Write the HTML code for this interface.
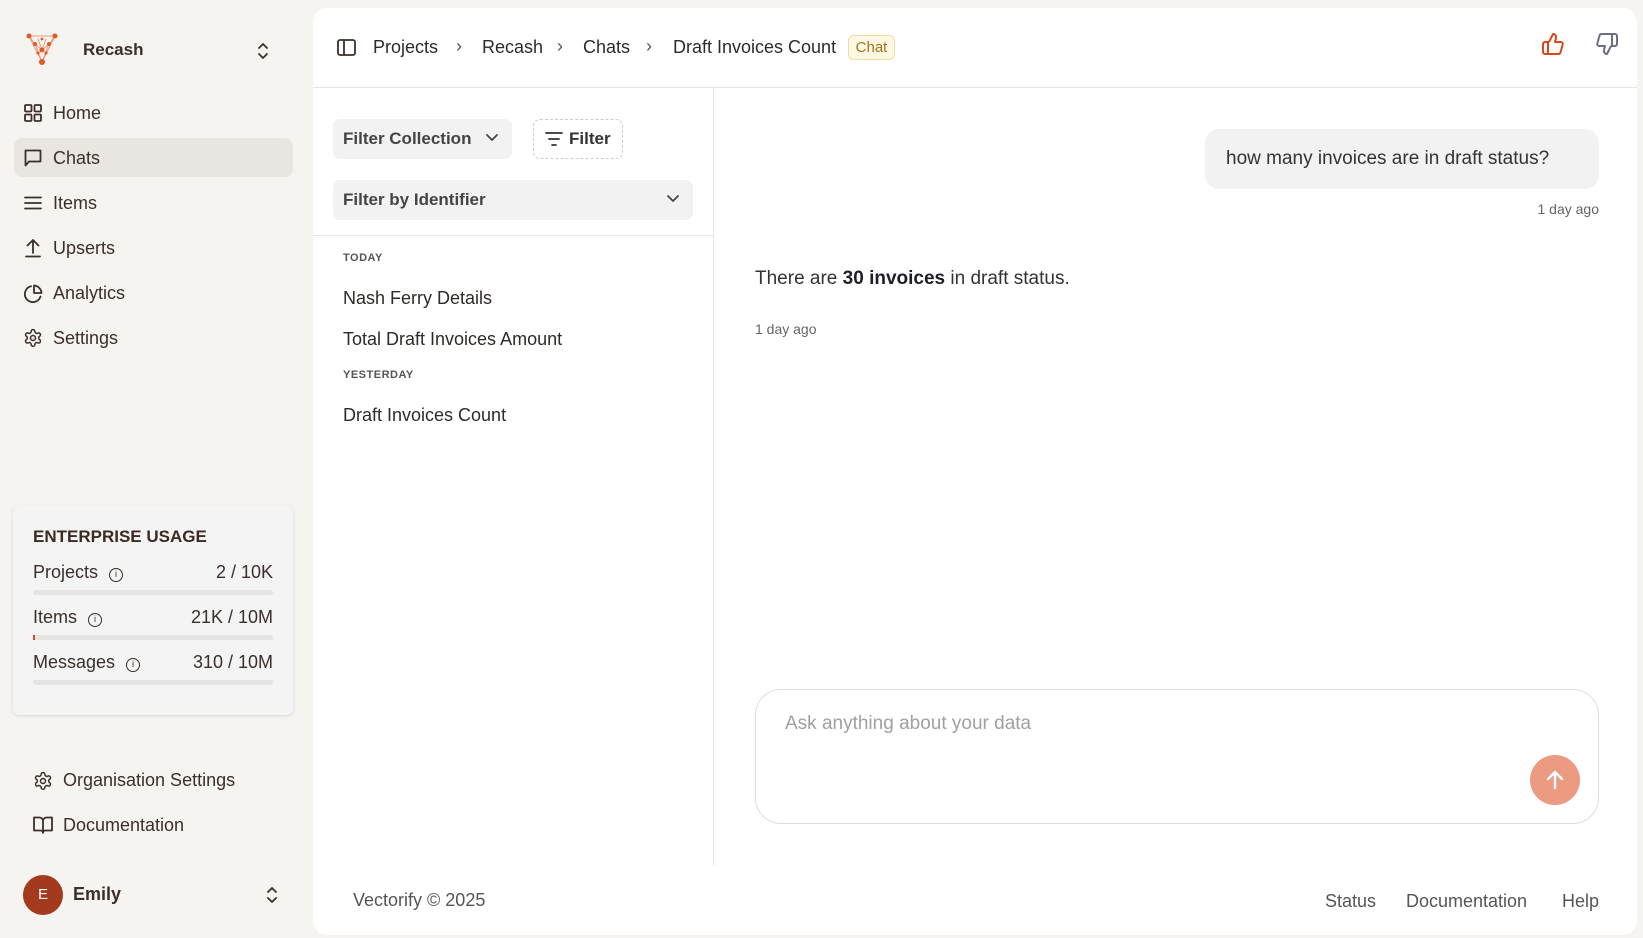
<!DOCTYPE html>
<html><head><meta charset="utf-8"><style>
*{box-sizing:border-box;margin:0;padding:0}
body{width:1643px;height:938px;background:#f5f4f1;font-family:"Liberation Sans",sans-serif;color:#3b2f2a;position:relative;overflow:hidden}
.a{position:absolute;white-space:nowrap}
.nav{font-size:18px;color:#3b2f2a}
svg{position:absolute;fill:none;stroke:#3b2f2a;stroke-width:1.8;stroke-linecap:round;stroke-linejoin:round}
.card{position:absolute;left:313px;top:8px;width:1324px;height:927px;background:#fff;border-radius:14px}
.t{font-size:18px;color:#2f2a28}
.bar{position:absolute;left:33px;width:240px;height:5px;border-radius:3px;background:#e4e3e1}
</style></head><body>
<!-- logo -->
<svg style="left:26px;top:32px;stroke:#e89a7a;stroke-width:1" width="32" height="36" viewBox="0 0 32 36"><path d="M3 4L29 4L16 30Z M3 4L9 12L16 18L23 12L29 4 M9 12L16 30 M23 12L16 30 M12 7L16 18L20 7"/><g fill="#e05a2a" stroke="none"><circle cx="3" cy="4" r="2.5"/><circle cx="29" cy="4" r="2.5"/><circle cx="16" cy="30" r="3"/><circle cx="16" cy="18" r="2.5"/><circle cx="9" cy="12" r="2"/><circle cx="23" cy="12" r="2"/><circle cx="12" cy="21" r="1.6"/><circle cx="20" cy="21" r="1.6"/><circle cx="16" cy="7" r="1.4"/></g></svg>
<div class="a" style="left:83px;top:40px;font-size:17px;font-weight:bold;color:#3b2f2a">Recash</div>
<svg style="left:256px;top:42px" width="14" height="18" viewBox="0 0 14 18"><path d="M3 6l4-4 4 4M3 12l4 4 4-4"/></svg>

<div class="a" style="left:14px;top:138px;width:279px;height:39px;background:#e9e6e2;border-radius:8px"></div>
<svg style="left:24px;top:104px" width="18" height="18" viewBox="0 0 18 18"><rect x="1" y="1" width="6.5" height="6.5" rx="1"/><rect x="10.5" y="1" width="6.5" height="6.5" rx="1"/><rect x="1" y="10.5" width="6.5" height="6.5" rx="1"/><rect x="10.5" y="10.5" width="6.5" height="6.5" rx="1"/></svg>
<div class="a nav" style="left:53px;top:103px">Home</div>
<svg style="left:24px;top:149px" width="18" height="18" viewBox="0 0 18 18"><path d="M1.5 1.5h15v11H5l-3.5 4z"/></svg>
<div class="a nav" style="left:53px;top:148px">Chats</div>
<svg style="left:24px;top:194px" width="18" height="18" viewBox="0 0 18 18"><path d="M1 3.5h16M1 9h16M1 14.5h16"/></svg>
<div class="a nav" style="left:53px;top:193px">Items</div>
<svg style="left:24px;top:238px" width="18" height="20" viewBox="0 0 18 20"><path d="M9 15V2M3.5 7.5L9 2l5.5 5.5M2 18.5h14"/></svg>
<div class="a nav" style="left:53px;top:238px">Upserts</div>
<svg style="left:23px;top:284px" width="20" height="20" viewBox="0 0 20 20"><path d="M17.5 12.5A8 8 0 1 1 8 2.3"/><path d="M11 1.5A8 8 0 0 1 18.5 9H11z"/></svg>
<div class="a nav" style="left:53px;top:283px">Analytics</div>
<svg style="left:23px;top:328px" width="20" height="20" viewBox="0 0 24 24"><path d="M12.2 2h-.4a2 2 0 0 0-2 2v.2a2 2 0 0 1-1 1.7l-.4.3a2 2 0 0 1-2 0l-.2-.1a2 2 0 0 0-2.7.7l-.2.4a2 2 0 0 0 .7 2.7l.2.1a2 2 0 0 1 1 1.7v.5a2 2 0 0 1-1 1.7l-.2.1a2 2 0 0 0-.7 2.7l.2.4a2 2 0 0 0 2.7.7l.2-.1a2 2 0 0 1 2 0l.4.3a2 2 0 0 1 1 1.7v.2a2 2 0 0 0 2 2h.4a2 2 0 0 0 2-2v-.2a2 2 0 0 1 1-1.7l.4-.3a2 2 0 0 1 2 0l.2.1a2 2 0 0 0 2.7-.7l.2-.4a2 2 0 0 0-.7-2.7l-.2-.1a2 2 0 0 1-1-1.7v-.5a2 2 0 0 1 1-1.7l.2-.1a2 2 0 0 0 .7-2.7l-.2-.4a2 2 0 0 0-2.7-.7l-.2.1a2 2 0 0 1-2 0l-.4-.3a2 2 0 0 1-1-1.7V4a2 2 0 0 0-2-2z"/><circle cx="12" cy="12" r="3"/></svg>
<div class="a nav" style="left:53px;top:328px">Settings</div>

<div class="a" style="left:13px;top:506px;width:280px;height:209px;background:#f4f4f4;border-radius:6px;box-shadow:0 1px 3px rgba(0,0,0,.12)"></div>
<div class="a" style="left:33px;top:527px;font-size:17px;font-weight:bold;color:#3b2a22">ENTERPRISE USAGE</div>
<div class="a nav" style="left:33px;top:562px">Projects <span style="display:inline-block;width:14px;height:14px;border:1.5px solid #3b2f2a;border-radius:50%;font-size:9px;text-align:center;line-height:11px;margin-left:6px;vertical-align:1px">i</span></div>
<div class="a nav" style="right:1370px;top:562px">2 / 10K</div>
<div class="bar" style="top:590px"></div>
<div class="a nav" style="left:33px;top:607px">Items <span style="display:inline-block;width:14px;height:14px;border:1.5px solid #3b2f2a;border-radius:50%;font-size:9px;text-align:center;line-height:11px;margin-left:6px;vertical-align:1px">i</span></div>
<div class="a nav" style="right:1370px;top:607px">21K / 10M</div>
<div class="bar" style="top:635px"></div><div class="a" style="left:33px;top:635px;width:2px;height:5px;background:#c2502a"></div>
<div class="a nav" style="left:33px;top:652px">Messages <span style="display:inline-block;width:14px;height:14px;border:1.5px solid #3b2f2a;border-radius:50%;font-size:9px;text-align:center;line-height:11px;margin-left:6px;vertical-align:1px">i</span></div>
<div class="a nav" style="right:1370px;top:652px">310 / 10M</div>
<div class="bar" style="top:680px"></div>

<svg style="left:33px;top:771px" width="20" height="20" viewBox="0 0 24 24"><path d="M12.2 2h-.4a2 2 0 0 0-2 2v.2a2 2 0 0 1-1 1.7l-.4.3a2 2 0 0 1-2 0l-.2-.1a2 2 0 0 0-2.7.7l-.2.4a2 2 0 0 0 .7 2.7l.2.1a2 2 0 0 1 1 1.7v.5a2 2 0 0 1-1 1.7l-.2.1a2 2 0 0 0-.7 2.7l.2.4a2 2 0 0 0 2.7.7l.2-.1a2 2 0 0 1 2 0l.4.3a2 2 0 0 1 1 1.7v.2a2 2 0 0 0 2 2h.4a2 2 0 0 0 2-2v-.2a2 2 0 0 1 1-1.7l.4-.3a2 2 0 0 1 2 0l.2.1a2 2 0 0 0 2.7-.7l.2-.4a2 2 0 0 0-.7-2.7l-.2-.1a2 2 0 0 1-1-1.7v-.5a2 2 0 0 1 1-1.7l.2-.1a2 2 0 0 0 .7-2.7l-.2-.4a2 2 0 0 0-2.7-.7l-.2.1a2 2 0 0 1-2 0l-.4-.3a2 2 0 0 1-1-1.7V4a2 2 0 0 0-2-2z"/><circle cx="12" cy="12" r="3"/></svg>
<div class="a nav" style="left:63px;top:770px">Organisation Settings</div>
<svg style="left:33px;top:816px" width="20" height="18" viewBox="0 0 20 18"><path d="M1 1.5h5.5a3.5 3.5 0 0 1 3.5 3.5v12a2.5 2.5 0 0 0-2.5-2.5H1zM19 1.5h-5.5A3.5 3.5 0 0 0 10 5v12a2.5 2.5 0 0 1 2.5-2.5H19z"/></svg>
<div class="a nav" style="left:63px;top:815px">Documentation</div>
<div class="a" style="left:23px;top:875px;width:40px;height:40px;border-radius:50%;background:#a33a1e;color:#fff;font-size:15px;text-align:center;line-height:40px">E</div>
<div class="a" style="left:73px;top:884px;font-size:18px;font-weight:bold">Emily</div>
<svg style="left:265px;top:886px" width="14" height="18" viewBox="0 0 14 18"><path d="M3 6l4-4 4 4M3 12l4 4 4-4"/></svg>

<div class="card"></div>
<div class="a" style="left:313px;top:87px;width:1324px;height:1px;background:#e6e5e3"></div>
<div class="a" style="left:713px;top:88px;width:1px;height:777px;background:#e6e5e3"></div>
<svg style="left:337px;top:39px" width="19" height="17" viewBox="0 0 19 17"><rect x="1" y="1" width="17" height="15" rx="2"/><path d="M7 1v15"/></svg>
<div class="a t" style="left:373px;top:37px">Projects</div>
<div class="a t" style="left:456px;top:36px;color:#555">›</div>
<div class="a t" style="left:482px;top:37px">Recash</div>
<div class="a t" style="left:557px;top:36px;color:#555">›</div>
<div class="a t" style="left:583px;top:37px">Chats</div>
<div class="a t" style="left:646px;top:36px;color:#555">›</div>
<div class="a t" style="left:673px;top:37px">Draft Invoices Count</div>
<div class="a" style="left:848px;top:35px;width:47px;height:25px;border:1px solid #f0dd9a;background:#fdf8e4;border-radius:6px;color:#a4741a;font-size:15px;text-align:center;line-height:23px">Chat</div>
<svg style="left:1541px;top:32px;stroke:#d9471d;stroke-width:2" width="24" height="24" viewBox="0 0 24 24"><path d="M7 10v12M15 5.9L14 10h5.8a2 2 0 0 1 1.9 2.6l-2.3 8A2 2 0 0 1 17.5 22H4a2 2 0 0 1-2-2v-8a2 2 0 0 1 2-2h2.8a2 2 0 0 0 1.8-1.1L12 2a3.1 3.1 0 0 1 3 3.9z"/></svg>
<svg style="left:1595px;top:32px;stroke:#6b7180;stroke-width:2" width="24" height="24" viewBox="0 0 24 24"><path d="M17 14V2M9 18.1L10 14H4.2a2 2 0 0 1-1.9-2.6l2.3-8A2 2 0 0 1 6.5 2H20a2 2 0 0 1 2 2v8a2 2 0 0 1-2 2h-2.8a2 2 0 0 0-1.8 1.1L12 22a3.1 3.1 0 0 1-3-3.9z"/></svg>

<div class="a" style="left:333px;top:119px;width:179px;height:40px;background:#f2f2f2;border-radius:7px"></div>
<div class="a" style="left:343px;top:129px;font-size:17px;font-weight:bold;color:#444">Filter Collection</div>
<svg style="left:485px;top:133px;stroke:#444" width="14" height="10" viewBox="0 0 14 10"><path d="M2 2l5 5 5-5"/></svg>
<div class="a" style="left:533px;top:119px;width:90px;height:40px;border:1px dashed #ccc;border-radius:7px"></div>
<svg style="left:545px;top:131px;stroke:#333" width="18" height="16" viewBox="0 0 18 16"><path d="M1 2h16M4 8h10M7 14h4"/></svg>
<div class="a" style="left:569px;top:129px;font-size:17px;font-weight:bold;color:#333">Filter</div>
<div class="a" style="left:333px;top:180px;width:360px;height:40px;background:#f2f2f2;border-radius:7px"></div>
<div class="a" style="left:343px;top:190px;font-size:17px;font-weight:bold;color:#444">Filter by Identifier</div>
<svg style="left:666px;top:194px;stroke:#444" width="14" height="10" viewBox="0 0 14 10"><path d="M2 2l5 5 5-5"/></svg>
<div class="a" style="left:313px;top:235px;width:400px;height:1px;background:#e6e5e3"></div>
<div class="a" style="left:343px;top:252px;font-size:11px;font-weight:bold;color:#555;letter-spacing:.5px">TODAY</div>
<div class="a t" style="left:343px;top:288px">Nash Ferry Details</div>
<div class="a t" style="left:343px;top:329px">Total Draft Invoices Amount</div>
<div class="a" style="left:343px;top:369px;font-size:11px;font-weight:bold;color:#555;letter-spacing:.5px">YESTERDAY</div>
<div class="a t" style="left:343px;top:405px">Draft Invoices Count</div>

<div class="a" style="left:1205px;top:129px;width:394px;height:60px;background:#f2f2f2;border-radius:14px"></div>
<div class="a" style="left:1226px;top:148px;font-size:19px;color:#333">how many invoices are in draft status?</div>
<div class="a" style="right:44px;top:201px;font-size:14px;color:#666">1 day ago</div>
<div class="a" style="left:755px;top:268px;font-size:19px;color:#333">There are <b style="color:#1e1e2a">30 invoices</b> in draft status.</div>
<div class="a" style="left:755px;top:321px;font-size:14px;color:#666">1 day ago</div>

<div class="a" style="left:755px;top:689px;width:844px;height:135px;border:1.5px solid #dedede;border-radius:26px"></div>
<div class="a" style="left:785px;top:713px;font-size:19px;color:#a0a0a0">Ask anything about your data</div>
<div class="a" style="left:1530px;top:755px;width:50px;height:50px;border-radius:50%;background:#ec9a82"></div>
<svg style="left:1543px;top:768px;stroke:#fff;stroke-width:2.4" width="24" height="24" viewBox="0 0 24 24"><path d="M12 20V4M5 11l7-7 7 7"/></svg>

<div class="a" style="left:353px;top:890px;font-size:18px;color:#555">Vectorify © 2025</div>
<div class="a" style="left:1325px;top:891px;font-size:18px;color:#555">Status</div>
<div class="a" style="left:1406px;top:891px;font-size:18px;color:#555">Documentation</div>
<div class="a" style="left:1562px;top:891px;font-size:18px;color:#555">Help</div>
</body></html>
